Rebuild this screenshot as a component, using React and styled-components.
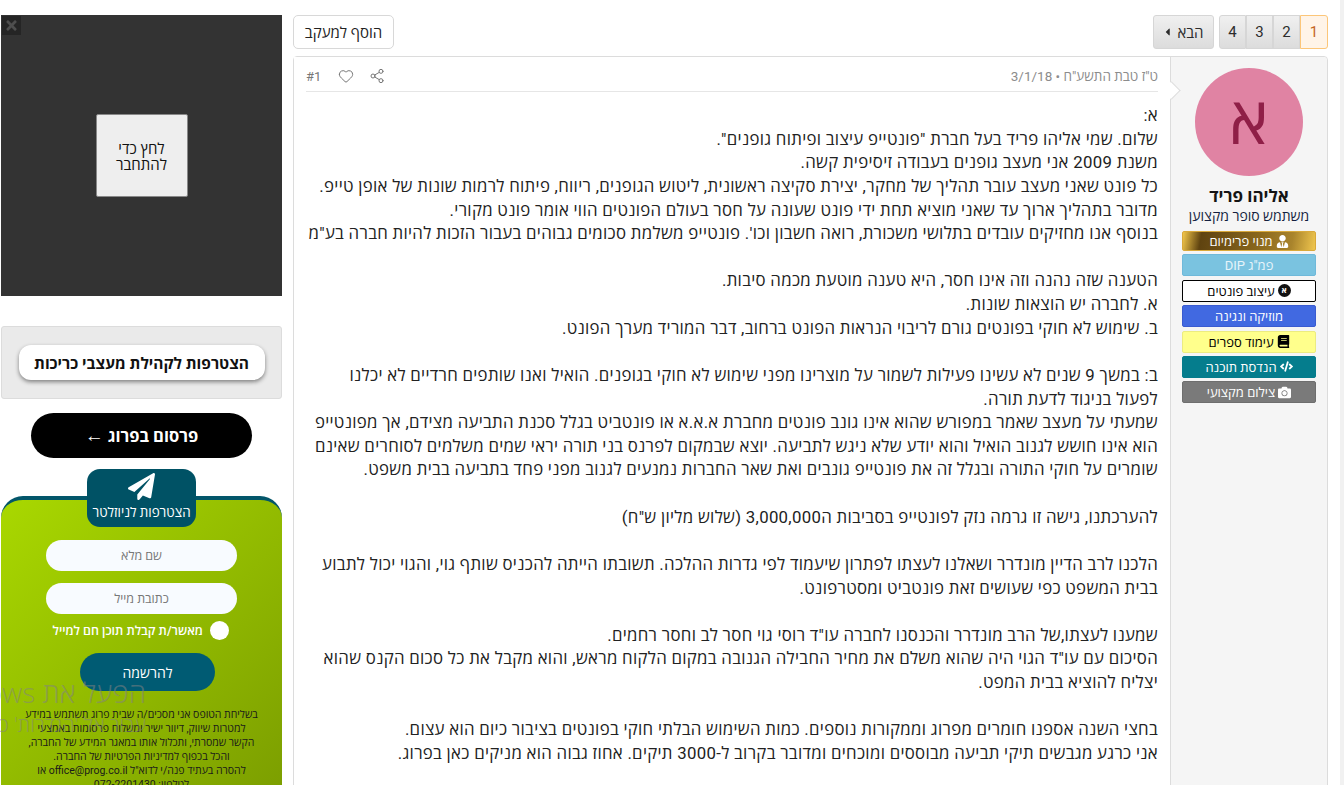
import React from 'react';
import styled, { createGlobalStyle } from 'styled-components';
import { Share2, Heart } from 'lucide-react';
import { FaUserTie, FaBook, FaCode, FaCamera, FaCaretLeft, FaPaperPlane, FaTimes } from 'react-icons/fa';

const Global = createGlobalStyle`
  html, body { margin: 0; padding: 0; height: 785px; overflow: hidden; background: #f1f1f1; }
  body { font-family: Roboto, "Open Sans", sans-serif; color: #141414; }
  * { box-sizing: border-box; }
`;

const Page = styled.div`
  direction: rtl;
  width: 1340px;
  height: 785px;
  overflow: hidden;
  background: #fff;
  display: flex;
  gap: 11px;
  padding: 15px 12px 0 1px;
  position: relative;
`;
const Main = styled.main`
  flex: 1;
  min-width: 0;
  display: flex;
  flex-direction: column;
  gap: 7px;
`;
const TopBar = styled.div`
  display: flex;
  justify-content: space-between;
  height: 34px;
  flex: none;
`;
const Pager = styled.nav`
  display: flex;
  gap: 5px;
`;
const PageGroup = styled.div`
  display: flex;
`;
const PageItem = styled.span`
  width: ${p => (p.$current ? 28 : 27)}px;
  display: flex;
  align-items: center;
  justify-content: center;
  font-size: 15px;
  color: ${p => (p.$current ? '#c4661f' : '#2c2c2c')};
  background: ${p => (p.$current ? '#fff4e8' : 'linear-gradient(#f0f0f0,#dcdcdc)')};
  border: 1px solid ${p => (p.$current ? '#fcc679' : '#d6d6d6')};
  border-radius: ${p => (p.$current ? '0 3px 3px 0' : '0')};
  &:last-child { border-radius: 3px 0 0 3px; }
`;
const NextBtn = styled.span`
  width: 61px;
  display: flex;
  align-items: center;
  justify-content: center;
  gap: 5px;
  font-size: 15px;
  color: #2c2c2c;
  background: linear-gradient(#f0f0f0,#dcdcdc);
  border: 1px solid #d6d6d6;
  border-radius: 3px;
  svg { width: 9px; height: 12px; }
`;
const FollowBtn = styled.span`
  width: 101px;
  display: flex;
  align-items: center;
  justify-content: center;
  font-size: 15px;
  color: #222;
  background: #fff;
  border: 1px solid #d8d8d8;
  border-radius: 5px;
`;
const Message = styled.article`
  display: flex;
  height: 760px;
  flex: none;
  border: 1px solid #dcdcdc;
  border-radius: 4px;
  position: relative;
`;
const UserCell = styled.aside`
  width: 157px;
  flex: none;
  background: #f5f5f5;
  border-left: 1px solid #dcdcdc;
  border-radius: 0 4px 0 0;
  padding-top: 11px;
  display: flex;
  flex-direction: column;
  align-items: center;
  position: relative;
  &::after {
    content: '';
    position: absolute;
    left: -6px;
    top: 27px;
    width: 12px;
    height: 12px;
    background: #fff;
    border-top: 1px solid #dcdcdc;
    border-left: 1px solid #dcdcdc;
    transform: rotate(135deg);
  }
`;
const Avatar = styled.div`
  width: 108px;
  height: 108px;
  border-radius: 50%;
  background: #e083a3;
  color: #8f1f47;
  display: flex;
  align-items: center;
  justify-content: center;
  font-size: 66px;
  line-height: 1;
`;
const UserName = styled.div`
  margin-top: 10px;
  font-size: 17px;
  font-weight: 700;
  line-height: 20px;
  color: #141414;
`;
const UserTitle = styled.div`
  font-size: 14px;
  line-height: 20px;
  margin-bottom: 5px;
  color: #141f3f;
`;
const Badge = styled.div`
  width: 134px;
  height: ${p => p.$h || 22}px;
  margin-bottom: 3.4px;
  border-radius: 2px;
  display: flex;
  align-items: center;
  justify-content: center;
  gap: 3px;
  font-size: 13px;
  color: ${p => p.$fg};
  background: ${p => p.$bg};
  border: 1px solid ${p => p.$line};
  svg { width: 13px; height: 13px; flex: none; }
`;
const LetterDot = styled.span`
  width: 13px;
  height: 13px;
  border-radius: 50%;
  background: #111;
  color: #fff;
  font-size: 8px;
  font-weight: 700;
  line-height: 13px;
  text-align: center;
`;
const Content = styled.div`
  flex: 1;
  min-width: 0;
  padding: 0 12px;
  background: #fff;
`;
const MetaRow = styled.div`
  height: 35px;
  border-bottom: 1px solid #e6e6e6;
  display: flex;
  align-items: center;
  justify-content: space-between;
  padding-top: 4px;
  font-size: 13.5px;
  color: #8c8c8c;
`;
const MetaActions = styled.div`
  display: flex;
  align-items: center;
  gap: 15px;
  color: #777;
  svg { width: 16px; height: 16px; display: block; }
`;
const PostNumber = styled.span`
  margin-right: 2px;
  font-size: 13px;
`;
const Body = styled.div`
  padding-top: 12px;
  font-size: 16.8px;
  letter-spacing: .3px;
  line-height: 23.63px;
  color: #222;
`;
const Line = styled.div`
  white-space: nowrap;
  min-height: 23.63px;
`;
const Side = styled.div`
  width: 281px;
  flex: none;
  display: flex;
  flex-direction: column;
  align-items: center;
`;
const AdBox = styled.div`
  width: 100%;
  height: 281px;
  flex: none;
  background: #333;
  display: flex;
  align-items: center;
  justify-content: center;
  position: relative;
`;
const AdClose = styled.span`
  position: absolute;
  left: 1px;
  top: 1px;
  width: 19px;
  height: 19px;
  background: #252525;
  color: #4e4e4e;
  display: flex;
  align-items: center;
  justify-content: center;
  svg { width: 15px; height: 15px; }
`;
const AdButton = styled.div`
  width: 92px;
  height: 83px;
  background: #eee;
  border: 1px solid #888;
  border-radius: 2px;
  display: flex;
  align-items: center;
  justify-content: center;
  text-align: center;
  font-family: "Open Sans", sans-serif;
  font-size: 15px;
  line-height: 16px;
  color: #111;
`;
const CommunityBox = styled.div`
  margin-top: 30px;
  width: 100%;
  height: 73px;
  flex: none;
  background: #eaeaea;
  border: 1px solid #dcdcdc;
  border-radius: 3px;
  display: flex;
  align-items: center;
  justify-content: center;
`;
const CommunityBtn = styled.div`
  width: 246px;
  height: 35px;
  background: #fff;
  border-radius: 12px;
  box-shadow: 0 2px 4px rgba(0,0,0,.45);
  display: flex;
  align-items: center;
  justify-content: center;
  font-size: 15.5px;
  font-weight: 700;
  color: #111;
`;
const BlackPill = styled.div`
  margin-top: 14px;
  width: 221px;
  height: 45px;
  flex: none;
  background: #000;
  border-radius: 23px;
  display: flex;
  align-items: center;
  justify-content: center;
  gap: 4px;
  color: #fff;
  font-size: 16.5px;
  font-weight: 700;
`;
const PillArrow = styled.span`
  font-family: "Liberation Sans", sans-serif;
  font-weight: 400;
  font-size: 19px;
  line-height: 1;
`;
const Panel = styled.section`
  margin-top: 38px;
  width: 100%;
  height: 320px;
  flex: none;
  background: linear-gradient(135deg, #a9d800, #7a9c00);
  border-top: 4px solid #03566a;
  border-radius: 22px 22px 0 0;
  display: flex;
  flex-direction: column;
  align-items: center;
`;
const NewsBadge = styled.div`
  margin-top: -31px;
  width: 109px;
  height: 58px;
  background: #005265;
  border-radius: 13px;
  color: #fff;
  font-size: 13.4px;
  font-weight: 500;
  white-space: nowrap;
  display: flex;
  flex-direction: column;
  align-items: center;
  padding-top: 4px;
  svg { width: 29px; height: 27px; margin-bottom: 3px; }
`;
const Field = styled.input`
  width: 191px;
  height: 31px;
  margin-top: ${p => p.$top}px;
  border: 0;
  outline: 0;
  border-radius: 16px;
  background: #f8fbff;
  text-align: center;
  font-family: Roboto, "Open Sans", sans-serif;
  font-size: 12.5px;
  &::placeholder { color: #777; opacity: 1; }
`;
const ConsentRow = styled.label`
  margin-top: 7px;
  height: 19px;
  display: flex;
  align-items: center;
  gap: 7px;
  align-self: flex-start;
  margin-right: 53px;
  font-size: 12.4px;
  font-weight: 600;
  color: #fff;
  white-space: nowrap;
`;
const Tick = styled.span`
  width: 19px;
  height: 19px;
  border-radius: 50%;
  background: #fff;
  flex: none;
`;
const Submit = styled.div`
  margin-top: 13px;
  margin-left: 12px;
  width: 135px;
  height: 38px;
  border-radius: 19px;
  background: #005b73;
  color: #fff;
  font-size: 14px;
  font-weight: 500;
  display: flex;
  align-items: center;
  justify-content: center;
`;
const Fine = styled.div`
  margin-top: 17px;
  font-size: 10.5px;
  line-height: 14px;
  text-align: center;
  color: #1a1a1a;
  white-space: nowrap;
`;
const Watermark = styled.div`
  position: absolute;
  right: calc(100% - 146px);
  top: ${p => p.$top}px;
  font-family: "Open Sans", sans-serif;
  font-weight: 300;
  font-size: ${p => p.$size}px;
  line-height: 1;
  white-space: nowrap;
  color: rgba(130,130,130,.55);
  pointer-events: none;
`;

const lines = [
  'א:',
  'שלום. שמי אליהו פריד בעל חברת "פונטייפ עיצוב ופיתוח גופנים".',
  'משנת 2009 אני מעצב גופנים בעבודה זיסיפית קשה.',
  'כל פונט שאני מעצב עובר תהליך של מחקר, יצירת סקיצה ראשונית, ליטוש הגופנים, ריווח, פיתוח לרמות שונות של אופן טייפ.',
  'מדובר בתהליך ארוך עד שאני מוציא תחת ידי פונט שעונה על חסר בעולם הפונטים הווי אומר פונט מקורי.',
  'בנוסף אנו מחזיקים עובדים בתלושי משכורת, רואה חשבון וכו\'. פונטייפ משלמת סכומים גבוהים בעבור הזכות להיות חברה בע"מ',
  '',
  'הטענה שזה נהנה וזה אינו חסר, היא טענה מוטעת מכמה סיבות.',
  'א. לחברה יש הוצאות שונות.',
  'ב. שימוש לא חוקי בפונטים גורם לריבוי הנראות הפונט ברחוב, דבר המוריד מערך הפונט.',
  '',
  'ב: במשך 9 שנים לא עשינו פעילות לשמור על מוצרינו מפני שימוש לא חוקי בגופנים. הואיל ואנו שותפים חרדיים לא יכלנו',
  'לפעול בניגוד לדעת תורה.',
  'שמעתי על מעצב שאמר במפורש שהוא אינו גונב פונטים מחברת א.א.א או פונטביט בגלל סכנת התביעה מצידם, אך מפונטייפ',
  'הוא אינו חושש לגנוב הואיל והוא יודע שלא ניגש לתביעה. יוצא שבמקום לפרנס בני תורה יראי שמים משלמים לסוחרים שאינם',
  'שומרים על חוקי התורה ובגלל זה את פונטייפ גונבים ואת שאר החברות נמנעים לגנוב מפני פחד בתביעה בבית משפט.',
  '',
  'להערכתנו, גישה זו גרמה נזק לפונטייפ בסביבות ה3,000,000 (שלוש מליון ש"ח)',
  '',
  'הלכנו לרב הדיין מונדרר ושאלנו לעצתו לפתרון שיעמוד לפי גדרות ההלכה. תשובתו הייתה להכניס שותף גוי, והגוי יכול לתבוע',
  'בבית המשפט כפי שעושים זאת פונטביט ומסטרפונט.',
  '',
  'שמענו לעצתו,של הרב מונדרר והכנסנו לחברה עו"ד רוסי גוי חסר לב וחסר רחמים.',
  'הסיכום עם עו"ד הגוי היה שהוא משלם את מחיר החבילה הגנובה במקום הלקוח מראש, והוא מקבל את כל סכום הקנס שהוא',
  'יצליח להוציא בבית המפט.',
  '',
  'בחצי השנה אספנו חומרים מפרוג וממקורות נוספים. כמות השימוש הבלתי חוקי בפונטים בציבור כיום הוא עצום.',
  'אני כרגע מגבשים תיקי תביעה מבוססים ומוכחים ומדובר בקרוב ל-3000 תיקים. אחוז גבוה הוא מניקים כאן בפרוג.',
];

const badges = [
  { t: 'מנוי פרימיום', h: 20, fg: '#fff', line: '#d9a93a', bg: 'linear-gradient(100deg,#f2c64a 0%,#5f4310 14%,#87651c 55%,#a9842c 82%,#f0c64e 100%)', icon: <FaUserTie /> },
  { t: 'פמ"ג DIP', fg: '#e6f4fa', line: '#6fb9da', bg: '#7ac3e0' },
  { t: 'עיצוב פונטים', fg: '#000', line: '#000', bg: '#fff', icon: <LetterDot>א</LetterDot> },
  { t: 'מוזיקה ונגינה', fg: '#fff', line: '#3a5bd0', bg: '#4169e1' },
  { t: 'עימוד ספרים', fg: '#000', line: '#ecec80', bg: '#ffff8c', icon: <FaBook /> },
  { t: 'הנדסת תוכנה', fg: '#fff', line: '#057c8c', bg: '#057d8d', icon: <FaCode /> },
  { t: 'צילום מקצועי', fg: '#fff', line: '#6e6e6e', bg: '#7a7a7a', icon: <FaCamera /> },
];

export default function App() {
  return (
    <>
      <Global />
      <Page>
        <Main>
          <TopBar>
            <Pager>
              <PageGroup>
                <PageItem $current>1</PageItem>
                <PageItem>2</PageItem>
                <PageItem>3</PageItem>
                <PageItem>4</PageItem>
              </PageGroup>
              <NextBtn>הבא <FaCaretLeft /></NextBtn>
            </Pager>
            <FollowBtn>הוסף למעקב</FollowBtn>
          </TopBar>
          <Message>
            <UserCell>
              <Avatar>א</Avatar>
              <UserName>אליהו פריד</UserName>
              <UserTitle>משתמש סופר מקצוען</UserTitle>
              {badges.map(b => (
                <Badge key={b.t} $h={b.h} $fg={b.fg} $bg={b.bg} $line={b.line}>
                  {b.icon}
                  <span>{b.t}</span>
                </Badge>
              ))}
            </UserCell>
            <Content>
              <MetaRow>
                <span>ט"ז טבת התשע"ח • 3/1/18</span>
                <MetaActions>
                  <Share2 strokeWidth={1.5} />
                  <Heart strokeWidth={1.5} />
                  <PostNumber>#1</PostNumber>
                </MetaActions>
              </MetaRow>
              <Body>
                {lines.map((l, i) => <Line key={i}>{l}</Line>)}
              </Body>
            </Content>
          </Message>
        </Main>
        <Side>
          <AdBox>
            <AdClose><FaTimes /></AdClose>
            <AdButton>לחץ כדי להתחבר</AdButton>
          </AdBox>
          <CommunityBox>
            <CommunityBtn>הצטרפות לקהילת מעצבי כריכות</CommunityBtn>
          </CommunityBox>
          <BlackPill>פרסום בפרוג <PillArrow>←</PillArrow></BlackPill>
          <Panel>
            <NewsBadge>
              <FaPaperPlane />
              <span>הצטרפות לניוזלטר</span>
            </NewsBadge>
            <Field $top={13} placeholder="שם מלא" />
            <Field $top={12} placeholder="כתובת מייל" />
            <ConsentRow><Tick /><span>מאשר/ת קבלת תוכן חם למייל</span></ConsentRow>
            <Submit>להרשמה</Submit>
            <Fine>
              בשליחת הטופס אני מסכים/ה שבית פרוג תשתמש במידע<br />
              למטרות שיווק, דיוור ישיר ומשלוח פרסומות באמצעי<br />
              הקשר שמסרתי, ותכלול אותו במאגר המידע של החברה,<br />
              והכל בכפוף למדיניות הפרטיות של החברה.<br />
              להסרה בעתיד פנה/י לדוא"ל office@prog.co.il או<br />
              לטלפון: 072-2201430
            </Fine>
          </Panel>
        </Side>
        <Watermark $top={678} $size={28}>הפעל את Windows</Watermark>
        <Watermark $top={715} $size={20}>עבור אל 'הגדרות' כדי להפעיל את Windows.</Watermark>
      </Page>
    </>
  );
}
